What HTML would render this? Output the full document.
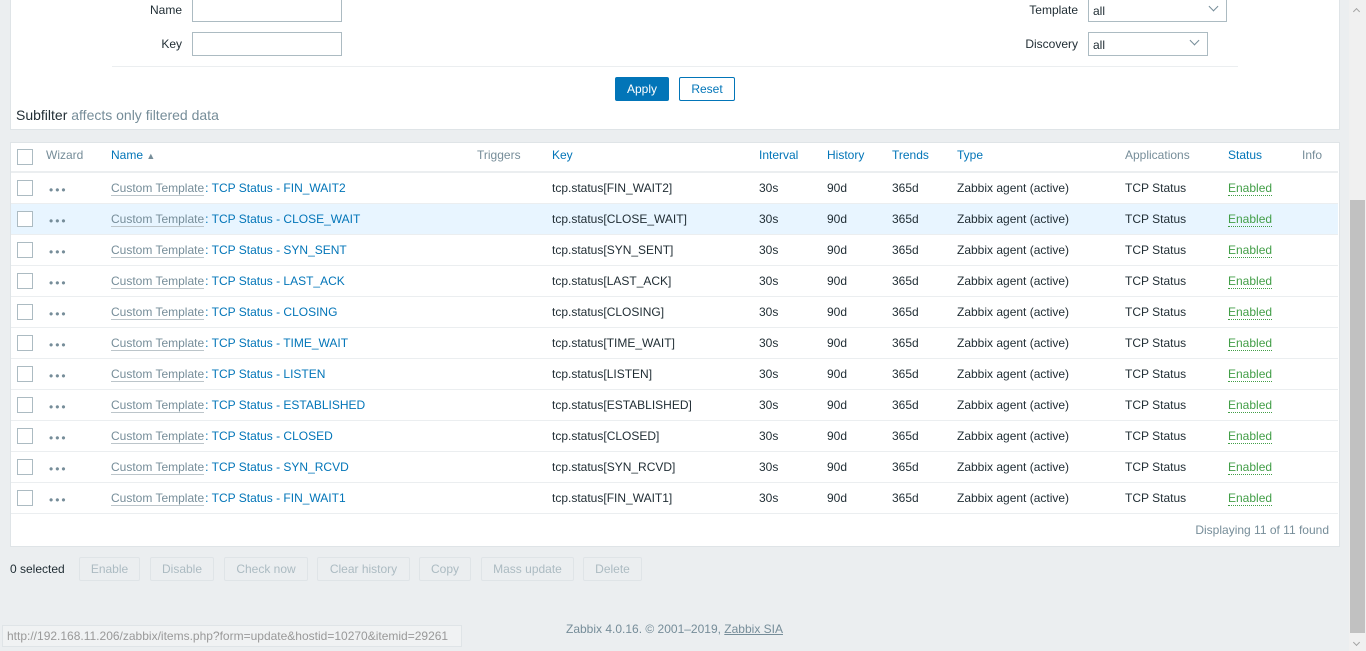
<!DOCTYPE html>
<html><head><meta charset="utf-8"><style>
*{box-sizing:border-box;margin:0;padding:0}
body{width:1366px;height:651px;overflow:hidden;background:#ebeef0;font-family:"Liberation Sans",Arial,sans-serif;font-size:12px;color:#1f2c33;position:relative}
.abs{position:absolute}
.panel{position:absolute;background:#fff;border:1px solid #dfe4e7}
.inp{position:absolute;height:24px;border:1px solid #acbbc2;background:#fff;padding:5px 4px 0;font-size:12px}
.lbl{position:absolute;text-align:right;font-size:12px}
.chev{position:absolute;width:7px;height:7px;border-right:1px solid #768d99;border-bottom:1px solid #768d99;transform:rotate(45deg)}
.btn{position:absolute;height:24px;font-size:12px;text-align:center;line-height:22px;border-radius:2px}
.row{position:absolute;left:11px;width:1327px;height:31px;border-bottom:1px solid #ebeef0}
.row span{position:absolute;top:8px;white-space:nowrap}
.cb{position:absolute;left:6px;top:7px;width:16px;height:16px;border:1px solid #acbbc2;background:#fff}
.row span.dots{left:38px;color:#768d99;letter-spacing:2px;font-size:12px;top:10px}
.ct{color:#768d99;border-bottom:1px solid #bcc5ca}
.lnk{color:#0275b8;margin-left:1px}
.en{color:#429e47;border-bottom:1px dotted #429e47}
.hd span{color:#0275b8;top:6px!important}
.hd span.g{color:#768d99}
.fb{position:absolute;top:557px;height:24px;border:1px solid #dfe4e7;color:#acbbc2;background:#ebeef0;line-height:22px;text-align:center;border-radius:2px}
</style></head><body>
<div class="panel" style="left:10px;top:-2px;width:1330px;height:132px;border-top:none"></div>
<div class="lbl" style="left:100px;top:3px;width:82px">Name</div>
<div class="inp" style="left:192px;top:-2px;width:150px"></div>
<div class="lbl" style="left:100px;top:37px;width:82px">Key</div>
<div class="inp" style="left:192px;top:32px;width:150px"></div>
<div class="lbl" style="left:990px;top:3px;width:88px">Template</div>
<div class="inp" style="left:1088px;top:-2px;width:139px">all</div>
<div class="chev" style="left:1210px;top:3px"></div>
<div class="lbl" style="left:990px;top:37px;width:88px">Discovery</div>
<div class="inp" style="left:1088px;top:32px;width:120px">all</div>
<div class="chev" style="left:1191px;top:37px"></div>
<div class="abs" style="left:112px;top:66px;width:1126px;height:1px;background:#ebeef0"></div>
<div class="btn" style="left:615px;top:77px;width:54px;background:#0275b8;color:#fff;border:1px solid #0275b8">Apply</div>
<div class="btn" style="left:679px;top:77px;width:56px;background:#fff;color:#0275b8;border:1px solid #0275b8">Reset</div>
<div class="abs" style="left:16px;top:107px;font-size:14px">Subfilter <span style="color:#768d99">affects only filtered data</span></div>

<div class="panel" style="left:10px;top:142px;width:1330px;height:405px"></div>
<div class="row hd" style="top:142px;height:31px;border-bottom:2px solid #ebeef0">
<div class="cb"></div>
<span class="g" style="left:35px">Wizard</span>
<span style="left:100px">Name <span style="position:static;font-size:9px;color:#768d99">▲</span></span>
<span class="g" style="left:466px">Triggers</span>
<span style="left:541px">Key</span>
<span style="left:748px">Interval</span>
<span style="left:816px">History</span>
<span style="left:881px">Trends</span>
<span style="left:946px">Type</span>
<span class="g" style="left:1114px">Applications</span>
<span style="left:1217px">Status</span>
<span class="g" style="left:1291px">Info</span>
</div>
<div id="rows"></div>
<div class="abs" style="right:37px;top:523px;color:#768d99">Displaying 11 of 11 found</div>

<div class="abs" style="left:10px;top:562px;color:#1f2c33">0 selected</div>
<div class="fb" style="left:79px;width:61px">Enable</div>
<div class="fb" style="left:150px;width:64px">Disable</div>
<div class="fb" style="left:224px;width:84px">Check now</div>
<div class="fb" style="left:317px;width:93px">Clear history</div>
<div class="fb" style="left:419px;width:52px">Copy</div>
<div class="fb" style="left:481px;width:93px">Mass update</div>
<div class="fb" style="left:583px;width:59px">Delete</div>

<div class="abs" style="left:566px;top:622px;color:#768d99">Zabbix 4.0.16. © 2001–2019, <span style="color:#768d99;text-decoration:underline">Zabbix SIA</span></div>
<div class="abs" style="left:2px;top:625px;width:460px;height:22px;background:#f0f2f3;border:1px solid #dfe4e7;color:#999;font-size:12px;padding:3px 4px">http://192.168.11.206/zabbix/items.php?form=update&amp;hostid=10270&amp;itemid=29261</div>

<div class="abs" style="left:1349px;top:0;width:17px;height:651px;background:#f0f0f0"></div>
<div class="abs" style="left:1350px;top:200px;width:15px;height:433px;background:#c1c1c1"></div>
<div class="chev" style="left:1354px;top:9px;transform:rotate(225deg);border-color:#a3a3a3;width:5px;height:5px"></div>
<div class="chev" style="left:1354px;top:640px;border-color:#a3a3a3;width:5px;height:5px"></div>

<script>
var names=["FIN_WAIT2","CLOSE_WAIT","SYN_SENT","LAST_ACK","CLOSING","TIME_WAIT","LISTEN","ESTABLISHED","CLOSED","SYN_RCVD","FIN_WAIT1"];
var h="";
names.forEach(function(n,i){
h+='<div class="row" style="top:'+(173+i*31)+'px;'+(i==1?'background:#e8f5ff':'')+'"><div class="cb"></div><span class="dots">•••</span>'+
'<span style="left:100px"><span class="ct" style="position:static">Custom Template</span><span class="lnk" style="position:static">: TCP Status - '+n+'</span></span>'+
'<span style="left:541px">tcp.status['+n+']</span><span style="left:748px">30s</span><span style="left:816px">90d</span><span style="left:881px">365d</span>'+
'<span style="left:946px">Zabbix agent (active)</span><span style="left:1114px">TCP Status</span><span class="en" style="left:1217px">Enabled</span></div>';
});
document.getElementById("rows").innerHTML=h;
</script>
</body></html>
